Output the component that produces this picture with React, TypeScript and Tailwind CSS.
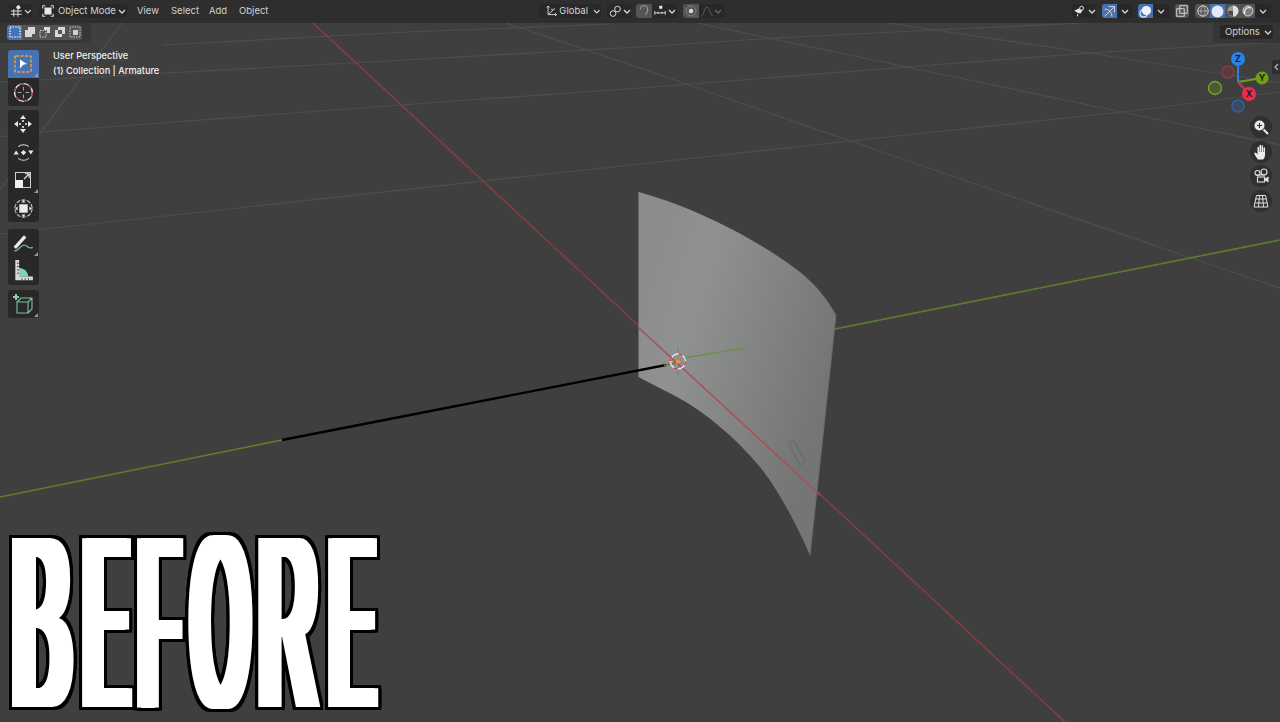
import type { ReactNode } from 'react';

const I = ({ children, className = 'w-[14px] h-[14px]', view = '0 0 16 16' }: { children: ReactNode; className?: string; view?: string }) => (
  <svg viewBox={view} className={className} fill="none" stroke="#dcdcdc" strokeWidth="1.2">
    {children}
  </svg>
);

const Chevron = ({ dim = false }: { dim?: boolean }) => (
  <svg viewBox="0 0 8 5" className="w-[8px] h-[5px]" fill="none" stroke={dim ? '#6a6a6a' : '#d6d6d6'} strokeWidth="1.3">
    <path d="M1 1l3 3 3-3" />
  </svg>
);

function Seg({ w, tone = 'dark', children, className = '' }: { w: string; tone?: 'dark' | 'grey' | 'blue'; children?: ReactNode; className?: string }) {
  const bg = tone === 'dark' ? 'bg-[#282828]' : tone === 'grey' ? 'bg-[#545454]' : 'bg-[#4772b3]';
  return <div className={`h-[14px] flex items-center justify-center ${w} ${bg} ${className}`}>{children}</div>;
}

function TopBar() {
  return (
    <header className="h-[23px] shrink-0 bg-[#2e2e2e] flex items-center pb-[1px] text-[9.5px] text-[#d2d2d2] whitespace-nowrap">
      <div className="ml-[9px] w-[23px] h-[14px] rounded-[3px] bg-[#282828] flex items-center gap-[1px] pl-[1px]">
        <I>
          <circle cx="10" cy="3.5" r="2.4" fill="#e6e6e6" stroke="none" />
          <path d="M1 8h13M1 12h13M4.5 6v9M9.5 6v9" />
        </I>
        <Chevron />
      </div>
      <div className="ml-[7px] w-[88px] h-[14px] rounded-[3px] bg-[#282828] flex items-center pl-[2px]">
        <I>
          <rect x="4" y="4" width="8" height="8" fill="#e8e8e8" stroke="none" />
          <path d="M2 5V2h3M11 2h3v3M14 11v3h-3M5 14H2v-3" />
        </I>
        <span className="ml-[3px] w-[60px]">Object Mode</span>
        <Chevron />
      </div>
      <nav className="flex">
        <span className="ml-[10px] w-[34px]">View</span>
        <span className="w-[38px]">Select</span>
        <span className="w-[30px]">Add</span>
        <span className="w-[28px]">Object</span>
      </nav>
      <div className="ml-[272px] w-[62px] h-[14px] rounded-[3px] bg-[#282828] flex items-center pl-[6px]">
        <I className="w-[13px] h-[13px]">
          <path d="M4 1v11h11M4 12l9-8M2 3l2-2 2 2M13 10l2 2-2 2" />
          <circle cx="9" cy="5" r="1" fill="#dcdcdc" stroke="none" />
        </I>
        <span className="ml-[2px] w-[36px]">Global</span>
        <Chevron />
      </div>
      <div className="ml-[6px] w-[24px] h-[14px] rounded-[3px] bg-[#282828] flex items-center pl-[2px] gap-[1px]">
        <I className="w-[13px] h-[13px]">
          <circle cx="5" cy="10.5" r="3.5" />
          <circle cx="10.5" cy="5" r="3.5" />
        </I>
        <Chevron />
      </div>
      <div className="ml-[5px] flex rounded-[3px] overflow-hidden">
        <Seg w="w-[16px]" tone="grey">
          <I className="w-[12px] h-[12px]">
            <path d="M3 6a5 5 0 0 1 10 0c0 3-1.500 5-3 7" strokeWidth="1.6" stroke="#9a9a9a" />
          </I>
        </Seg>
        <Seg w="w-[25px]" className="gap-[2px]">
          <I className="w-[12px] h-[12px]">
            <rect x="7" y="1" width="4" height="4" fill="#e6e6e6" stroke="none" />
            <path d="M1 8v5M15 8v5M5.500 9v3M10.500 9v3M1 10.500h14" />
          </I>
          <Chevron />
        </Seg>
      </div>
      <div className="ml-[6px] flex rounded-[3px] overflow-hidden">
        <Seg w="w-[16px]" tone="grey">
          <svg viewBox="0 0 12 12" className="w-[12px] h-[12px]">
            <circle cx="6" cy="6" r="5" fill="none" stroke="#7c7c7c" strokeWidth="1" />
            <circle cx="6" cy="6" r="2.200" fill="#d8d8d8" />
          </svg>
        </Seg>
        <Seg w="w-[25px]" className="gap-[1px]">
          <svg viewBox="0 0 12 12" className="w-[12px] h-[12px]" fill="none" stroke="#5c5c5c" strokeWidth="1">
            <path d="M0 11c3 0 3-9 6-9s3 9 6 9" />
          </svg>
          <Chevron dim />
        </Seg>
      </div>

      <div className="ml-[348px] w-[24px] h-[14px] rounded-[3px] bg-[#282828] flex items-center pl-[1px] gap-[1px]">
        <I className="w-[14px] h-[13px]">
          <path d="M1 7l6-3 5 1-3 5-3 0z" fill="#e6e6e6" stroke="none" />
          <circle cx="10" cy="4" r="2.400" fill="#2a2a2a" />
          <path d="M5 11v3" />
        </I>
        <Chevron />
      </div>
      <div className="ml-[6px] flex rounded-[3px] overflow-hidden">
        <Seg w="w-[15px]" tone="blue">
          <I className="w-[13px] h-[13px]">
            <path d="M2 14L13 3M7 2h7v7M2 5c5 0 9 4 9 9" />
          </I>
        </Seg>
        <Seg w="w-[16px]"><Chevron /></Seg>
      </div>
      <div className="ml-[5px] flex rounded-[3px] overflow-hidden">
        <Seg w="w-[15px]" tone="blue">
          <svg viewBox="0 0 14 14" className="w-[13px] h-[13px]">
            <circle cx="8" cy="6" r="5" fill="#eef2f8" />
            <circle cx="5" cy="9" r="4" fill="none" stroke="#eef2f8" strokeWidth="1.2" />
          </svg>
        </Seg>
        <Seg w="w-[16px]"><Chevron /></Seg>
      </div>
      <Seg w="w-[14px]" tone="grey" className="ml-[6px] rounded-[3px]">
        <I className="w-[12px] h-[12px]">
          <rect x="1" y="5" width="10" height="10" />
          <rect x="5" y="1" width="10" height="10" />
        </I>
      </Seg>
      <div className="ml-[6px] flex rounded-[3px] overflow-hidden">
        <Seg w="w-[15px]" tone="grey">
          <I className="w-[12px] h-[12px]">
            <circle cx="8" cy="8" r="7" />
            <path d="M1 8h14M8 1c-4 4-4 10 0 14M8 1c4 4 4 10 0 14" strokeWidth="0.8" />
          </I>
        </Seg>
        <Seg w="w-[15px]" tone="blue">
          <svg viewBox="0 0 12 12" className="w-[13px] h-[13px]"><circle cx="6" cy="6" r="5.500" fill="#e4ebf7" /></svg>
        </Seg>
        <Seg w="w-[15px]" tone="grey">
          <svg viewBox="0 0 12 12" className="w-[12px] h-[12px]">
            <circle cx="6" cy="6" r="5.500" fill="#9a9a9a" />
            <path d="M6 .5a5.500 5.500 0 0 1 0 11z" fill="#dedede" />
            <path d="M1 6a5 5 0 0 0 5 5V6z" fill="#4a4a4a" />
          </svg>
        </Seg>
        <Seg w="w-[15px]" tone="grey">
          <svg viewBox="0 0 12 12" className="w-[12px] h-[12px]">
            <circle cx="6" cy="6" r="5" fill="#7a7a7a" stroke="#d6d6d6" strokeWidth="1" />
            <path d="M3 9a4.500 4.500 0 0 1 6-6" fill="none" stroke="#e4e4e4" strokeWidth="1.300" />
          </svg>
        </Seg>
        <Seg w="w-[16px]"><Chevron /></Seg>
      </div>
    </header>
  );
}

function ToolBtn({ children, active = false, corner = false, first = false, last = false }: { children: ReactNode; active?: boolean; corner?: boolean; first?: boolean; last?: boolean }) {
  return (
    <div className={`relative w-[31px] h-[28px] flex items-center justify-center ${active ? 'bg-[#4772b3]' : 'bg-[#282828]'} ${first ? 'rounded-t-[3px]' : ''} ${last ? 'rounded-b-[3px]' : ''}`}>
      {children}
      {corner && <span className="absolute right-[1px] bottom-[1px] w-0 h-0 border-l-[4px] border-b-[4px] border-l-transparent border-b-[#9a9a9a]" />}
    </div>
  );
}

function SelectModes() {
  const tile = 'w-[15px] h-[14.500px] flex items-center justify-center';
  return (
    <div className="absolute left-0 top-0 w-[91px] h-[20px] bg-[#363636] rounded-br-[5px] flex pl-[7px] pt-[2px]">
      <div className="flex rounded-[3px] overflow-hidden h-[14.500px]">
        <div className={`${tile} bg-[#4772b3]`}>
          <svg viewBox="0 0 12 12" className="w-[12px] h-[12px]"><rect x="1" y="1" width="10" height="10" fill="none" stroke="#fff" strokeWidth="1.200" strokeDasharray="1.500 1.200" /></svg>
        </div>
        <div className={`${tile} bg-[#545454]`}>
          <svg viewBox="0 0 12 12" className="w-[12px] h-[12px]" fill="#d8d8d8"><path d="M4 1h7v7H8v3H1V4h3z" /></svg>
        </div>
        <div className={`${tile} bg-[#545454]`}>
          <svg viewBox="0 0 12 12" className="w-[12px] h-[12px]" fill="#d8d8d8">
            <path d="M5 1h6v6H8V4H5z" />
            <rect x="1" y="4.500" width="6" height="6.500" fill="none" stroke="#d8d8d8" strokeDasharray="1.300 1.200" />
          </svg>
        </div>
        <div className={`${tile} bg-[#545454]`}>
          <svg viewBox="0 0 12 12" className="w-[12px] h-[12px]" fill="#d8d8d8"><path d="M4 1h7v7H8V4H4zM1 4h3v4h4v3H1z" /></svg>
        </div>
        <div className={`${tile} bg-[#545454]`}>
          <svg viewBox="0 0 12 12" className="w-[12px] h-[12px]">
            <rect x="1" y="1" width="10" height="10" fill="none" stroke="#cfcfcf" strokeDasharray="1.300 1.200" />
            <rect x="4" y="4" width="5" height="5" fill="#cfcfcf" />
          </svg>
        </div>
      </div>
    </div>
  );
}

function ToolShelf() {
  return (
    <aside className="absolute left-[7.500px] top-[27px] flex flex-col w-[31px]">
      <div className="flex flex-col mb-[4px]">
        <ToolBtn active first corner>
          <svg viewBox="0 0 20 20" className="w-[20px] h-[20px]">
            <rect x="2" y="2" width="16" height="16" rx="1" fill="none" stroke="#e9a13c" strokeWidth="1.500" strokeDasharray="3 1.500" />
            <path d="M7 5.500l7 4.500-3 .5-1 .5-3 3.500z" fill="#fff" />
          </svg>
        </ToolBtn>
        <ToolBtn last>
          <svg viewBox="0 0 20 20" className="w-[21px] h-[21px]" fill="none">
            <circle cx="10" cy="10" r="8.500" stroke="#e8e8e8" strokeWidth="1.300" />
            <circle cx="10" cy="10" r="8.500" stroke="#a8283a" strokeWidth="1.300" strokeDasharray="4 5" />
            <path d="M10 4.500v3.500M10 12v3.500M4.500 10H8M12 10h3.500" stroke="#a8a8a8" />
          </svg>
        </ToolBtn>
      </div>
      <div className="flex flex-col mb-[7px]">
        <ToolBtn first>
          <svg viewBox="0 0 20 20" className="w-[20px] h-[20px]" fill="#e8e8e8" stroke="none">
            <path d="M10 1l3 4H7zM10 19l-3-4h6zM1 10l4-3v6zM19 10l-4 3V7z" />
            <path d="M9.200 6h1.600v2H9.200zM9.200 12h1.600v2H9.200zM6 9.200h2v1.600H6zM12 9.200h2v1.600h-2z" />
          </svg>
        </ToolBtn>
        <ToolBtn>
          <svg viewBox="0 0 20 20" className="w-[21px] h-[21px]">
            <path d="M5 4.500a7.500 7.500 0 0 1 10 0M15 15.500a7.500 7.500 0 0 1-10 0" fill="none" stroke="#d4d4d4" strokeWidth="1" />
            <path d="M10 7.500l2.500 2.500-2.500 2.500-2.500-2.500z" fill="#e8e8e8" />
            <path d="M0.500 12l2.500-4 2.500 4zM14.500 8l2.500 4 2.500-4z" fill="#e8e8e8" />
          </svg>
        </ToolBtn>
        <ToolBtn corner>
          <svg viewBox="0 0 20 20" className="w-[20px] h-[20px]">
            <rect x="2.500" y="2.500" width="15" height="15" fill="none" stroke="#cfcfcf" strokeWidth="1" />
            <rect x="2" y="10" width="8" height="8" fill="#f0f0f0" />
            <path d="M11 9l5-5M12 3.800h4.200V8" fill="none" stroke="#e8e8e8" strokeWidth="1.100" />
          </svg>
        </ToolBtn>
        <ToolBtn last>
          <svg viewBox="0 0 20 20" className="w-[21px] h-[21px]">
            <circle cx="10" cy="10" r="8.200" fill="none" stroke="#c8c8c8" strokeWidth="1" strokeDasharray="4 1.200" />
            <rect x="6" y="6" width="8" height="8" fill="#ececec" />
            <path d="M10 2l1.800 2.400H8.200zM10 18l-1.800-2.400h3.600zM2 10l2.400-1.800v3.600zM18 10l-2.400 1.800V8.200z" fill="#e8e8e8" />
          </svg>
        </ToolBtn>
      </div>
      <div className="flex flex-col mb-[5px]">
        <ToolBtn first corner>
          <svg viewBox="0 0 22 20" className="w-[24px] h-[22px]" fill="none">
            <path d="M3 17c3 2 5-5 9-5 4 0 3 4 8 2" stroke="#6fb794" strokeWidth="1.200" />
            <path d="M3.500 14.500L13 4" stroke="#ececec" strokeWidth="3" />
          </svg>
        </ToolBtn>
        <ToolBtn last>
          <svg viewBox="0 0 20 20" className="w-[22px] h-[22px]">
            <path d="M6 15V7a9 9 0 0 1 9 8z" fill="#7fd6ad" />
            <path d="M3 0h3.500v15H19v3.500H3z" fill="#d8d8d8" />
            <path d="M6.500 3h-2M6.500 6h-2M6.500 9h-2M6.500 12h-2M9 18.500v-2M12 18.500v-2M15 18.500v-2" stroke="#444" strokeWidth="0.800" />
          </svg>
        </ToolBtn>
      </div>
      <div className="flex flex-col">
        <ToolBtn first last corner>
          <svg viewBox="0 0 22 22" className="w-[22px] h-[22px]" fill="none">
            <path d="M5 9h11v11H5zM5 9l4-4h11v11l-4 4M16 9l4-4" stroke="#7cc29e" strokeWidth="1.100" />
            <path d="M1 4h6M4 1v6" stroke="#7fd6ad" strokeWidth="2" />
          </svg>
        </ToolBtn>
      </div>
    </aside>
  );
}

function Scene() {
  return (
    <svg viewBox="0 23 1280 699" className="absolute inset-0 w-full h-full">
      <defs>
        <linearGradient id="sheet" gradientUnits="userSpaceOnUse" x1="639" y1="300" x2="836" y2="360">
          <stop offset="0" stopColor="#8b8d8c" />
          <stop offset="0.25" stopColor="#8f9291" />
          <stop offset="1" stopColor="#747675" />
        </linearGradient>
      </defs>
      <g stroke="#4e4e4e" strokeWidth="1.200" fill="none">
        <path d="M0 234L640 164L850 141L1122 112L1280 92" />
        <path d="M0 137L41 132L400 105L640 88L907 67L1089 53L1280 42" />
        <path d="M0 82L351 63L640 47L775 38L934 30L1085 23" />
        <path d="M163 45L408 32L612 24" />
        <path d="M506 23L640 68L850 141L1191 258L1280 288" />
        <path d="M697 23L907 67L1122 112L1280 145" />
        <path d="M889 23L1089 53L1280 83" />
        <path d="M122 23L41 132L0 190" />
      </g>
      <path d="M0 497L282 440M835 329L1280 240" stroke="#5f7f2a" strokeWidth="1.600" />
      <path d="M312 22L1065 722" stroke="#843c43" strokeWidth="1.600" />
      <path
        d="M638.500 192C688 205 753 236 800 272C816 285 828 300 836 315L810 555C798 528 780 492 760 467C735 437 705 412 677 397C664 390 650 383 638.500 377Z"
        fill="url(#sheet)"
      />
      <path d="M836 315L810 555" stroke="#6a6c6b" strokeWidth="1" />
      <path d="M639 328L820 495" stroke="#b24a58" strokeWidth="1.500" />
      <path d="M282 440L666 365" stroke="#000" strokeWidth="2.400" />
      <path d="M664 365.500L676 363" stroke="#5f7f2a" strokeWidth="1.500" />
      <path d="M684 358L745 348" stroke="#6e8f44" strokeWidth="1.500" />
      <rect x="794" y="441" width="6" height="24" rx="1.500" transform="rotate(-28 797 453)" fill="none" stroke="#666868" strokeWidth="1" />
      <path d="M678 348V356M678 366V375" stroke="#5d7ea8" strokeWidth="1" />
      <circle cx="678" cy="361.500" r="7.500" fill="none" stroke="#e6e6e6" strokeWidth="1.400" />
      <circle cx="678" cy="361.500" r="7.500" fill="none" stroke="#d63a4a" strokeWidth="1.400" strokeDasharray="4 8" />
      <rect x="676" y="360" width="3.500" height="3.500" fill="#f0932b" />
      <g fontFamily="Inter, sans-serif" fontSize="9" fontWeight="700" fill="#1c1c1c" textAnchor="middle">
        <circle cx="1228" cy="72" r="6" fill="#553c40" stroke="#9c3a48" strokeWidth="1.200" />
        <circle cx="1215" cy="88" r="6.500" fill="#4d5a34" stroke="#7da020" strokeWidth="1.400" />
        <circle cx="1238" cy="106" r="6" fill="#3c4a5e" stroke="#2e64a8" strokeWidth="1.400" />
        <path d="M1238 82V60" stroke="#2a81e6" strokeWidth="2" />
        <path d="M1238 82L1262 78" stroke="#6ea012" strokeWidth="2" />
        <path d="M1238 82L1249 94" stroke="#d92c4c" strokeWidth="2" />
        <circle cx="1238" cy="59" r="7" fill="#2a81e6" />
        <circle cx="1262" cy="78" r="6.500" fill="#6ea012" />
        <circle cx="1249" cy="94" r="7" fill="#f0294f" />
        <text x="1238" y="62">Z</text>
        <text x="1262" y="81">Y</text>
        <text x="1249" y="97">X</text>
      </g>
    </svg>
  );
}

function NavButtons() {
  const dot = 'w-[22px] h-[22px] rounded-full bg-[#2f2f2f] flex items-center justify-center';
  return (
    <div className="absolute left-[1250px] top-[93px] flex flex-col gap-[2.500px]">
      <div className={dot}>
        <svg viewBox="0 0 16 16" className="w-[16px] h-[16px]" fill="none">
          <circle cx="6.500" cy="6.500" r="5" fill="#e8e8e8" />
          <path d="M10.500 10.500L15 15" stroke="#e8e8e8" strokeWidth="2" />
          <path d="M6.500 4v5M4 6.500h5" stroke="#333" strokeWidth="1.200" />
        </svg>
      </div>
      <div className={dot}>
        <svg viewBox="0 0 16 16" className="w-[16px] h-[16px]" fill="#ececec">
          <path d="M5 15.500C3 13 1 10 1.500 9c.5-1 2 0 3 1.500V3.500c0-1 1.500-1 1.500 0V8h.5V1.500c0-1 1.500-1 1.500 0V8h.5V2c0-1 1.500-1 1.500 0v6h.5V4c0-1 1.500-1 1.500 0v7c0 2-1 3.500-2 4.500z" />
        </svg>
      </div>
      <div className={dot}>
        <svg viewBox="0 0 16 16" className="w-[16px] h-[16px]" fill="none" stroke="#e0e0e0" strokeWidth="1.100">
          <circle cx="4.500" cy="5" r="2.500" />
          <circle cx="11" cy="4" r="3" />
          <rect x="4.500" y="9" width="7" height="5" />
          <path d="M12 11l3-1.500v4L12 12" fill="#e0e0e0" />
          <path d="M3 7h9" />
        </svg>
      </div>
      <div className={dot}>
        <svg viewBox="0 0 16 16" className="w-[16px] h-[16px]" fill="none" stroke="#e0e0e0" strokeWidth="1">
          <path d="M3.500 2.500h9L15 14H1zM2.700 6h10.600M2 10h12M6.500 2.500L5.500 14M9.500 2.500L10.500 14" />
        </svg>
      </div>
    </div>
  );
}

function BigWord() {
  const glyph = "shrink-0 text-[240px] leading-[180px] font-normal text-white origin-top-left [font-family:'Liberation_Sans',sans-serif]";
  return (
    <div className="absolute left-[13.200px] top-[508px] flex [filter:drop-shadow(4px_0_0_#fff)_drop-shadow(-4px_0_0_#fff)_drop-shadow(4px_0_0_#fff)_drop-shadow(-4px_0_0_#fff)_drop-shadow(3px_0_0_#000)_drop-shadow(-3px_0_0_#000)_drop-shadow(0_3px_0_#000)_drop-shadow(0_-3px_0_#000)]">
      <span className={`${glyph} mr-[-88.200px] [transform:scale(.356,1.02)]`}>B</span>
      <span className={`${glyph} mr-[-105.200px] [transform:scale(.262,1.02)]`}>E</span>
      <span className={`${glyph} mr-[-93.900px] [transform:scale(.257,1.02)]`}>F</span>
      <span className={`${glyph} mr-[-119.400px] [transform:scale(.294,1.02)]`}>O</span>
      <span className={`${glyph} mr-[-102.100px] [transform:scale(.322,1.02)]`}>R</span>
      <span className={`${glyph} mr-[-105px] [transform:scale(.262,1.02)]`}>E</span>
    </div>
  );
}

export default function App() {
  return (
    <div className="w-[1280px] h-[722px] overflow-hidden flex flex-col bg-[#3f3f3f] [font-family:Inter,'Liberation_Sans',sans-serif] blur-[0.4px]">
      <TopBar />
      <main className="relative flex-1">
        <Scene />
        <SelectModes />
        <div className="absolute right-0 top-0 w-[67px] h-[20px] bg-[#363636] rounded-bl-[5px] pl-[7px] pt-[2px]">
          <div className="w-[53px] h-[14px] rounded-[3px] bg-[#282828] flex items-center pl-[5px] gap-[5px] text-[9.500px] text-[#d2d2d2]">
            <span className="w-[34px]">Options</span>
            <Chevron />
          </div>
        </div>
        <ToolShelf />
        <div className="absolute left-[53px] top-[25px] text-[9.200px] leading-[15px] font-medium text-[#f2f2f2]">
          <p>User Perspective</p>
          <p>(1) Collection | Armature</p>
        </div>
        <div className="absolute right-0 top-[37px] w-[8px] h-[14px] bg-[#2d2d2d] rounded-l-[3px] flex items-center justify-center">
          <svg viewBox="0 0 5 8" className="w-[5px] h-[8px]" fill="none" stroke="#b8b8b8" strokeWidth="1.200"><path d="M4 1L1 4l3 3" /></svg>
        </div>
        <NavButtons />
        <BigWord />
      </main>
    </div>
  );
}
